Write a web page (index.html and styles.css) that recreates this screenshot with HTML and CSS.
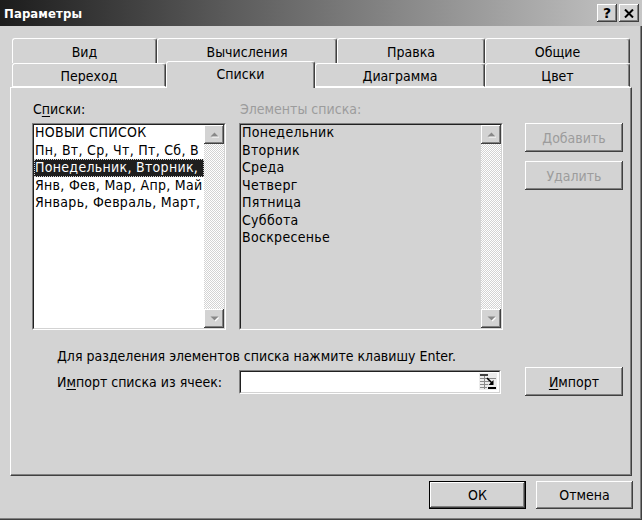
FILE: index.html
```html
<!DOCTYPE html>
<html lang="ru">
<head>
<meta charset="utf-8">
<title>Параметры</title>
<link rel="stylesheet" href="styles.css">
</head>
<body>
<div class="window">
  <div class="titlebar">
    <span class="title">Параметры</span>
    <div class="cap-btns">
      <span class="cap-btn help">?</span>
      <span class="cap-btn close"><svg width="10" height="9" viewBox="0 0 10 9"><path d="M1 0.5 L9 8.5 M9 0.5 L1 8.5" stroke="#000" stroke-width="2"/></svg></span>
    </div>
  </div>
  <div class="body">
    <div class="tabs">
      <div class="tab-row">
        <div class="tab t-vid">Вид</div>
        <div class="tab t-calc">Вычисления</div>
        <div class="tab t-edit">Правка</div>
        <div class="tab t-gen">Общие</div>
      </div>
      <div class="tab-row">
        <div class="tab t-go">Переход</div>
        <div class="tab t-lists active">Списки</div>
        <div class="tab t-chart">Диаграмма</div>
        <div class="tab t-color">Цвет</div>
      </div>
    </div>
    <div class="panel">
      <div class="lists">
        <div class="col col-left">
          <div class="label">С<span class="ul">п</span>иски:</div>
          <div class="listbox white">
            <div class="lb-inner">
              <div class="items">
                <div class="item">НОВЫЙ СПИСОК</div>
                <div class="item">Пн, Вт, Ср, Чт, Пт, Сб, В</div>
                <div class="item selected"><span>Понедельник, Вторник,</span></div>
                <div class="item">Янв, Фев, Мар, Апр, Май</div>
                <div class="item">Январь, Февраль, Март,</div>
              </div>
              <div class="scrollbar">
                <div class="sb-btn"><svg width="9" height="6" viewBox="0 0 9 6"><path d="M1.5 5.5 L5.5 1.5 L9.5 5.5 Z" fill="#fff"/><path d="M0.5 4.5 L4.5 0.5 L8.5 4.5 Z" fill="#888"/></svg></div>
                <div class="sb-track"></div>
                <div class="sb-btn"><svg width="9" height="6" viewBox="0 0 9 6"><path d="M1.5 1.5 L9.5 1.5 L5.5 5.5 Z" fill="#fff"/><path d="M0.5 0.5 L8.5 0.5 L4.5 4.5 Z" fill="#888"/></svg></div>
              </div>
            </div>
          </div>
        </div>
        <div class="col col-right">
          <div class="label disabled">Элементы списка:</div>
          <div class="listbox gray">
            <div class="lb-inner">
              <div class="items">
                <div class="item">Понедельник</div>
                <div class="item">Вторник</div>
                <div class="item">Среда</div>
                <div class="item">Четверг</div>
                <div class="item">Пятница</div>
                <div class="item">Суббота</div>
                <div class="item">Воскресенье</div>
              </div>
              <div class="scrollbar">
                <div class="sb-btn"><svg width="9" height="6" viewBox="0 0 9 6"><path d="M1.5 5.5 L5.5 1.5 L9.5 5.5 Z" fill="#fff"/><path d="M0.5 4.5 L4.5 0.5 L8.5 4.5 Z" fill="#888"/></svg></div>
                <div class="sb-track"></div>
                <div class="sb-btn"><svg width="9" height="6" viewBox="0 0 9 6"><path d="M1.5 1.5 L9.5 1.5 L5.5 5.5 Z" fill="#fff"/><path d="M0.5 0.5 L8.5 0.5 L4.5 4.5 Z" fill="#888"/></svg></div>
              </div>
            </div>
          </div>
        </div>
        <div class="col col-btns">
          <div class="btn disabled-btn">Добавить</div>
          <div class="btn disabled-btn">Удалить</div>
        </div>
      </div>
      <div class="hint">Для разделения элементов списка нажмите клавишу Enter.</div>
      <div class="import-row">
        <div class="import-label">И<span class="ul">м</span>порт списка из ячеек:</div>
        <div class="field">
          <div class="field-inner">
            <svg class="range-icon" width="18" height="17" viewBox="0 0 18 17">
              <rect x="0" y="0" width="18" height="17" fill="#ececec"/>
              <rect x="1" y="1" width="8" height="2" fill="#404040"/>
              <path d="M1 5.5 H17 M1 8.5 H10 M1 11.5 H9 M1 14.5 H8 M5.5 3 V16" stroke="#8a8a8a" stroke-width="1"/>
              <path d="M8 5 L13 10" stroke="#000" stroke-width="1.6"/>
              <path d="M14.5 7 V12 H9.5 Z" fill="#000"/>
              <rect x="9" y="14" width="8" height="2" fill="#000"/>
            </svg>
          </div>
        </div>
        <div class="btn import-btn"><span class="ul">И</span>мпорт</div>
      </div>
    </div>
    <div class="footer">
      <div class="btn default-btn">ОК</div>
      <div class="btn">Отмена</div>
    </div>
  </div>
</div>
</body>
</html>
```

FILE: styles.css
```css
html, body {
  margin: 0;
  padding: 0;
  background: #d3d3d3;
}

.window {
  width: 642px;
  height: 520px;
  box-sizing: border-box;
  background: #d3d3d3;
  font-family: "DejaVu Sans Condensed", "DejaVu Sans", sans-serif;
  font-size: 14px;
  color: #000;
  overflow: hidden;
  box-shadow: inset -1px -1px #404040, inset -2px -2px #808080;
}

.titlebar {
  height: 26px;
  display: flex;
  align-items: center;
  justify-content: space-between;
  padding: 0 3px 0 4px;
  background: linear-gradient(to right, #1c1c1c 0%, #5a5a5a 35%, #c6c6c6 100%);
}

.title {
  color: #fff;
  font-weight: bold;
  font-size: 13px;
  letter-spacing: 0.1px;
}

.cap-btns {
  display: flex;
  gap: 2px;
}

.cap-btn {
  width: 20px;
  height: 18px;
  box-sizing: border-box;
  display: flex;
  align-items: center;
  justify-content: center;
  background: #d3d3d3;
  box-shadow: inset -1px -1px #404040, inset 1px 1px #fff, inset -2px -2px #808080;
  font-weight: bold;
  font-size: 14px;
  font-family: "DejaVu Sans", sans-serif;
}

.body {
  padding: 12px 0 0 10px;
}

.tabs {
  padding-left: 2px;
  height: 49px;
}

.tab-row {
  display: flex;
}

.tab-row:first-child {
  height: 25px;
}

.tab-row:last-child {
  height: 24px;
}

.tab {
  box-sizing: border-box;
  height: 100%;
  display: flex;
  align-items: center;
  justify-content: center;
  background: #d3d3d3;
  border-top: 1px solid #fff;
  border-left: 1px solid #fff;
  border-right: 1px solid #404040;
  box-shadow: inset -1px 0 #808080;
  border-radius: 3px 3px 0 0;
  padding-top: 1px;
}

.t-vid { width: 145px; }
.t-calc { width: 180px; }
.t-edit { width: 148px; }
.t-gen { width: 145px; }
.t-go { width: 154px; }
.t-lists { width: 149px; }
.t-chart { width: 170px; }
.t-color { width: 145px; }

.tab-row:last-child .tab:not(.active) {
  border-bottom: 1px solid #fff;
}

.tab.active {
  position: relative;
  z-index: 1;
  height: 27px;
  margin-top: -2px;
  padding-bottom: 3px;
}

.panel {
  box-sizing: border-box;
  width: 622px;
  height: 389px;
  border-left: 1px solid #fff;
  border-top: 1px solid #fff;
  border-right: 1px solid #404040;
  border-bottom: 1px solid #404040;
  box-shadow: inset -1px -1px #808080;
  padding: 11px 0 0 21px;
}

.lists {
  display: flex;
}

.col {
  display: flex;
  flex-direction: column;
}

.col-left {
  width: 194px;
}

.col-right {
  width: 264px;
  margin-left: 13px;
}

.col-btns {
  margin-left: 22px;
  padding-top: 24px;
  gap: 9px;
}

.label {
  height: 17px;
  line-height: 17px;
  margin-top: 2px;
  margin-bottom: 5px;
  padding-left: 1px;
}

.label.disabled {
  color: #9c9c9c;
}

.ul {
  text-decoration: underline;
  text-underline-offset: 2px;
}

.listbox {
  box-sizing: border-box;
  height: 207px;
  border: 1px solid;
  border-color: #808080 #fff #fff #808080;
}

.lb-inner {
  box-sizing: border-box;
  height: 100%;
  display: flex;
  border: 1px solid;
  border-color: #202020 #d3d3d3 #d3d3d3 #202020;
}

.listbox.white .lb-inner {
  background: #fff;
}

.listbox.gray .lb-inner {
  background: #d3d3d3;
}

.items {
  flex: 1;
  min-width: 0;
  overflow: hidden;
  margin-top: -1px;
}

.item {
  height: 17.5px;
  line-height: 17.5px;
  padding-left: 1px;
  white-space: nowrap;
  letter-spacing: 0.3px;
}

.item.selected {
  background: #1e1e1e;
  color: #fff;
  padding-left: 0;
  border: 1px dotted #d3d3d3;
  box-sizing: border-box;
  line-height: 15.5px;
}

.scrollbar {
  width: 20px;
  display: flex;
  flex-direction: column;
}

.sb-btn {
  height: 19px;
  box-sizing: border-box;
  display: flex;
  align-items: center;
  justify-content: center;
  background: #d3d3d3;
  box-shadow: inset -1px -1px #404040, inset 1px 1px #fff, inset -2px -2px #808080;
}

.sb-track {
  flex: 1;
  background: repeating-conic-gradient(#fff 0 25%, #d3d3d3 0 50%) 0 0 / 2px 2px;
}

.btn {
  box-sizing: border-box;
  width: 98px;
  height: 29px;
  display: flex;
  align-items: center;
  justify-content: center;
  background: #d3d3d3;
  box-shadow: inset -1px -1px #404040, inset 1px 1px #fff, inset -2px -2px #808080;
}

.disabled-btn {
  color: #9c9c9c;
}

.hint {
  margin: 18px 0 0 25px;
  line-height: 17px;
}

.import-row {
  display: flex;
  align-items: center;
  margin-top: 2px;
}

.import-label {
  width: 182px;
  margin-left: 25px;
}

.field {
  box-sizing: border-box;
  width: 262px;
  height: 24px;
  border: 1px solid;
  border-color: #808080 #fff #fff #808080;
}

.field-inner {
  box-sizing: border-box;
  height: 100%;
  background: #fff;
  border: 1px solid;
  border-color: #202020 #d3d3d3 #d3d3d3 #202020;
  display: flex;
  justify-content: flex-end;
  align-items: center;
  padding-right: 2px;
}

.import-btn {
  margin-left: 24px;
}

.footer {
  display: flex;
  justify-content: flex-end;
  gap: 10px;
  padding: 5px 9px 0 0;
}

.footer .btn {
  width: 97px;
  height: 28px;
}

.default-btn {
  border: 1px solid #000;
}
```
